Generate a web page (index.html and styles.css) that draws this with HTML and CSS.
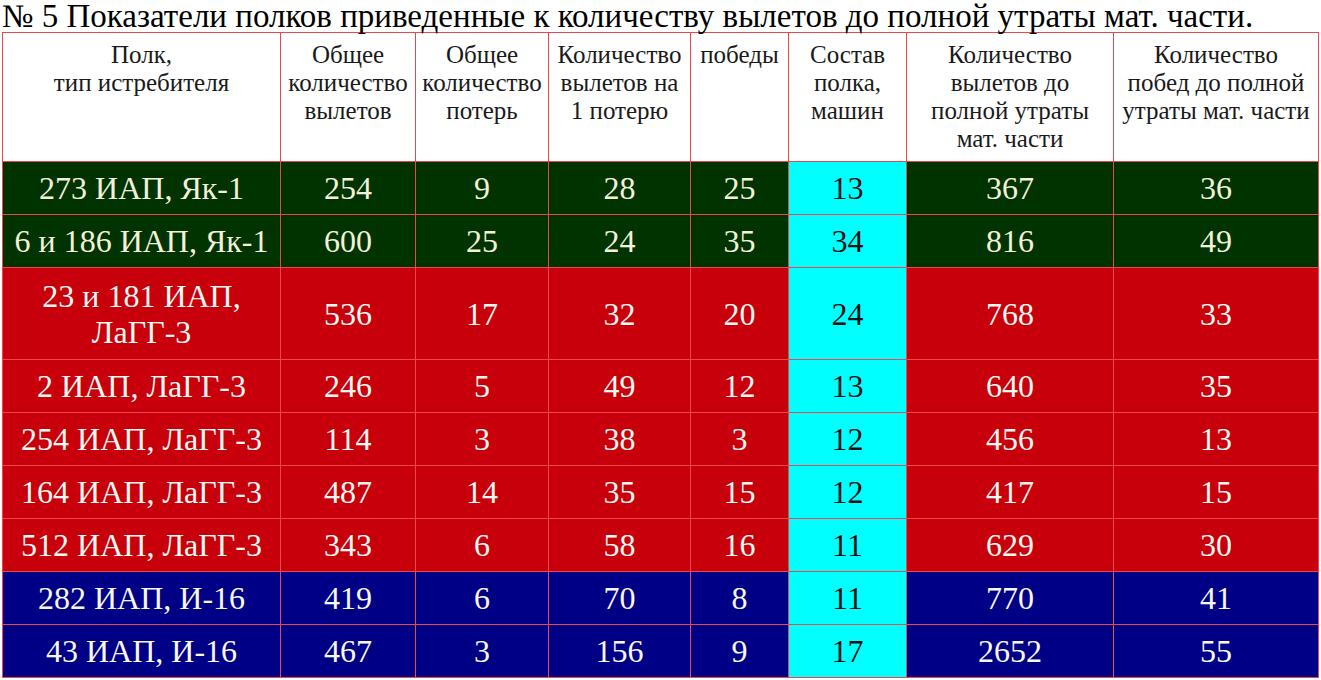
FILE: index.html
```html
<!DOCTYPE html>
<html lang="ru">
<head>
<meta charset="utf-8">
<link rel="stylesheet" href="styles.css">
</head>
<body>
<div class="page">
<h1 class="title">№ 5 Показатели полков приведенные к количеству вылетов до полной утраты мат. части.</h1>
<table class="tbl">
<colgroup>
<col class="c1"><col class="c2"><col class="c3"><col class="c4"><col class="c5"><col class="c6"><col class="c7"><col class="c8">
</colgroup>
<thead>
<tr class="head">
<th>Полк,<br>тип истребителя</th>
<th>Общее<br>количество<br>вылетов</th>
<th>Общее<br>количество<br>потерь</th>
<th>Количество<br>вылетов на<br>1 потерю</th>
<th>победы</th>
<th>Состав<br>полка,<br>машин</th>
<th>Количество<br>вылетов до<br>полной утраты<br>мат. части</th>
<th>Количество<br>побед до полной<br>утраты мат. части</th>
</tr>
</thead>
<tbody>
<tr class="green r"><td>273 ИАП, Як-1</td><td>254</td><td>9</td><td>28</td><td>25</td><td class="cy">13</td><td>367</td><td>36</td></tr>
<tr class="green r"><td>6 и 186 ИАП, Як-1</td><td>600</td><td>25</td><td>24</td><td>35</td><td class="cy">34</td><td>816</td><td>49</td></tr>
<tr class="red tall"><td>23 и 181 ИАП,<br>ЛаГГ-3</td><td>536</td><td>17</td><td>32</td><td>20</td><td class="cy">24</td><td>768</td><td>33</td></tr>
<tr class="red r"><td>2 ИАП, ЛаГГ-3</td><td>246</td><td>5</td><td>49</td><td>12</td><td class="cy">13</td><td>640</td><td>35</td></tr>
<tr class="red r"><td>254 ИАП, ЛаГГ-3</td><td>114</td><td>3</td><td>38</td><td>3</td><td class="cy">12</td><td>456</td><td>13</td></tr>
<tr class="red r"><td>164 ИАП, ЛаГГ-3</td><td>487</td><td>14</td><td>35</td><td>15</td><td class="cy">12</td><td>417</td><td>15</td></tr>
<tr class="red r"><td>512 ИАП, ЛаГГ-3</td><td>343</td><td>6</td><td>58</td><td>16</td><td class="cy">11</td><td>629</td><td>30</td></tr>
<tr class="blue r"><td>282 ИАП, И-16</td><td>419</td><td>6</td><td>70</td><td>8</td><td class="cy">11</td><td>770</td><td>41</td></tr>
<tr class="blue r"><td>43 ИАП, И-16</td><td>467</td><td>3</td><td>156</td><td>9</td><td class="cy">17</td><td>2652</td><td>55</td></tr>
</tbody>
</table>
</div>
</body>
</html>
```
FILE: styles.css
```css
html, body {
  margin: 0;
  padding: 0;
  background: #ffffff;
}
.page {
  padding: 0 0 0 2px;
  font-family: "Liberation Serif", "Times New Roman", serif;
}
.title {
  margin: 0;
  font-weight: normal;
  font-size: 33px;
  line-height: 32px;
  height: 32px;
  color: #000;
  white-space: nowrap;
}
.tbl {
  border-collapse: collapse;
  table-layout: fixed;
  width: 1316px;
}
.c1 { width: 278px; }
.c2 { width: 135px; }
.c3 { width: 133px; }
.c4 { width: 142px; }
.c5 { width: 98px; }
.c6 { width: 118px; }
.c7 { width: 207px; }
.c8 { width: 205px; }
.tbl th, .tbl td {
  border: 1px solid #e8484e;
  text-align: center;
  padding: 0;
}
.head th {
  height: 129px;
  vertical-align: top;
  font-weight: normal;
  font-size: 25px;
  line-height: 28px;
  color: #1a1a1a;
  padding-top: 8px;
  box-sizing: border-box;
  white-space: nowrap;
}
.tbl td {
  font-size: 32px;
  line-height: 36px;
  vertical-align: middle;
  color: #f8f8f2;
}
.r td { height: 52px; }
.tall td { height: 91px; }
.green td { background: #003300; color: #f3f1d9; }
.red td { background: #c8000b; }
.blue td { background: #000086; }
.tbl td.cy { background: #00ffff; color: #111; }
```
